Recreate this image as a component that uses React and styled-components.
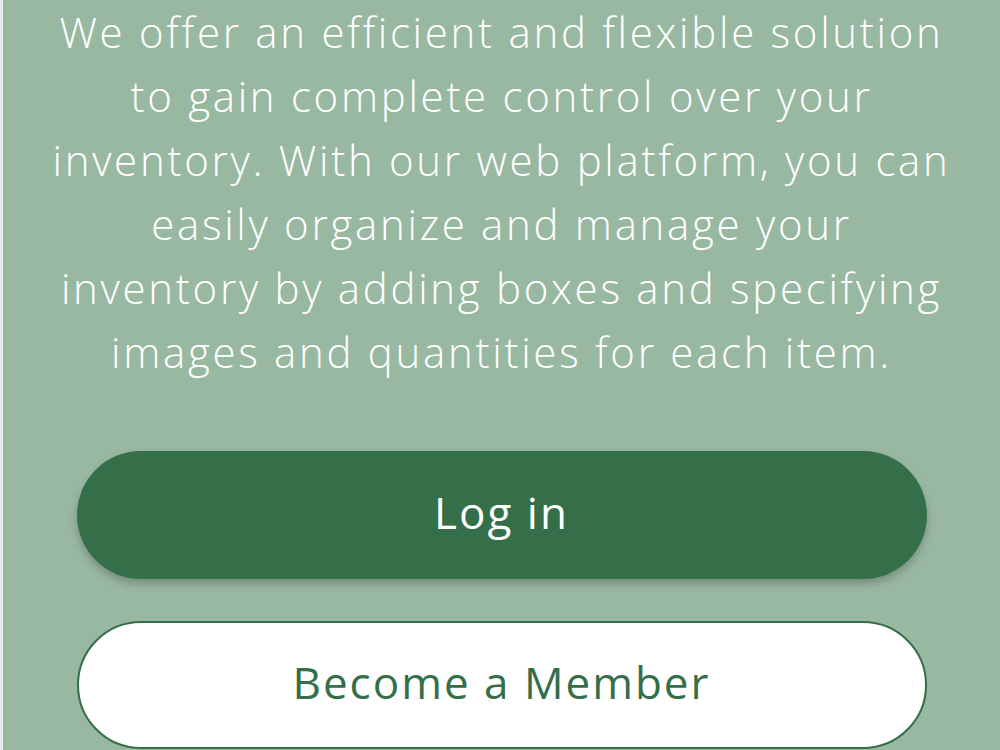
import React from "react";
import styled, { createGlobalStyle } from "styled-components";

const Global = createGlobalStyle`
  html, body {
    margin: 0;
    padding: 0;
    background: #99b8a2;
  }
  body {
    font-family: "Open Sans", "Noto Sans", sans-serif;
  }
`;

const Page = styled.main`
  box-sizing: border-box;
  min-height: 750px;
  height: 750px;
  overflow: hidden;
  background: #99b8a2;
  border-left: 3px solid #e6eaee;
  display: flex;
  flex-direction: column;
  align-items: center;
  padding-top: 0;
`;

const Intro = styled.p`
  margin: 0;
  color: #ffffff;
  font-family: "Open Sans", "Noto Sans", sans-serif;
  font-weight: 300;
  font-size: 42px;
  line-height: 64px;
  letter-spacing: 2.7px;
  text-align: center;
`;

const Line = styled.span`
  display: block;
  white-space: nowrap;
`;

const Actions = styled.div`
  margin-top: 67px;
  width: 850px;
  display: flex;
  flex-direction: column;
  gap: 42px;
`;

const Button = styled.button`
  box-sizing: border-box;
  height: 128px;
  width: 100%;
  border-radius: 64px;
  font-family: "Open Sans", "Noto Sans", sans-serif;
  font-weight: 400;
  font-size: 44px;
  letter-spacing: 2px;
  cursor: pointer;
  display: flex;
  align-items: center;
  justify-content: center;
  padding: 0 0 6px;
  background: ${(p) => (p.$outline ? "#ffffff" : "#346f49")};
  color: ${(p) => (p.$outline ? "#346f49" : "#ffffff")};
  border: ${(p) => (p.$outline ? "2px solid #346f49" : "none")};
  box-shadow: ${(p) => (p.$outline ? "none" : "0 5px 8px rgba(0, 0, 0, 0.22)")};
`;

const lines = [
  "We offer an efficient and flexible solution",
  "to gain complete control over your",
  "inventory. With our web platform, you can",
  "easily organize and manage your",
  "inventory by adding boxes and specifying",
  "images and quantities for each item.",
];

export default function App() {
  return (
    <>
      <Global />
      <Page>
        <Intro>
          {lines.map((l) => (
            <Line key={l}>{l}</Line>
          ))}
        </Intro>
        <Actions>
          <Button>Log in</Button>
          <Button $outline>Become a Member</Button>
        </Actions>
      </Page>
    </>
  );
}
